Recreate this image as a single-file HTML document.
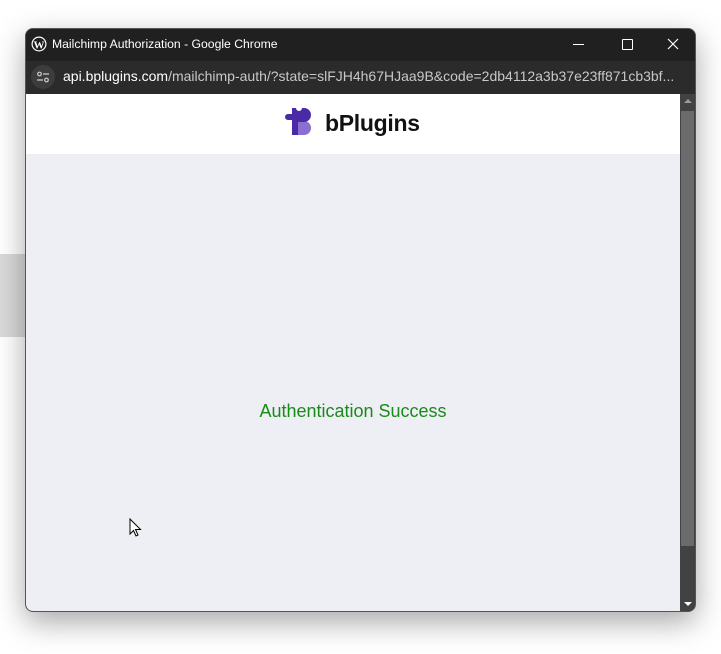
<!DOCTYPE html>
<html><head><style>
body{margin:0;width:721px;height:654px;background:#fff;position:relative;overflow:hidden;font-family:"Liberation Sans",sans-serif}
.side{position:absolute;left:0;top:254px;width:26px;height:83px;background:#dadada}
.win{position:absolute;left:25px;top:28px;width:671px;height:584px;border-radius:8px;overflow:hidden;background:#202020;box-shadow:0 10px 30px rgba(0,0,0,.35);border:1px solid #555;box-sizing:border-box}
.title{position:absolute;left:0;top:0;width:100%;height:32px;background:#202020;color:#fff;font-size:12.2px}
.addr{position:absolute;left:0;top:32px;width:100%;height:33px;background:#2b2b2b;color:#c8c8c8;font-size:14px}
.content{position:absolute;left:0;top:65px;width:654px;height:518px;background:#eeeff4}
.hdr{position:absolute;left:0;top:0;width:100%;height:60px;background:#fff}
.sb{position:absolute;left:654px;top:65px;width:16px;height:518px;background:#424242}
</style></head><body>
<div class="side"></div>
<div class="win">
 <div class="title">
  <svg style="position:absolute;left:5px;top:7px" width="16" height="16" viewBox="0 0 16 16"><circle cx="8" cy="8" r="7.5" fill="#fff"/><circle cx="8" cy="8" r="6.3" fill="#202020"/><text x="8" y="12.5" font-size="11" font-weight="bold" fill="#fff" text-anchor="middle" font-family="Liberation Serif">W</text></svg>
  <span style="position:absolute;left:26px;top:8px">Mailchimp Authorization - Google Chrome</span>
  <div style="position:absolute;left:547px;top:15px;width:11px;height:1px;background:#fff"></div>
  <div style="position:absolute;left:596px;top:10px;width:9px;height:9px;border:1px solid #fff;border-radius:1px"></div>
  <svg style="position:absolute;left:641px;top:9px" width="12" height="12"><path d="M1 1L11 11M11 1L1 11" stroke="#fff" stroke-width="1.2"/></svg>
 </div>
 <div class="addr">
  <div style="position:absolute;left:5px;top:4px;width:24px;height:24px;border-radius:12px;background:#3c3c3c"></div>
  <svg style="position:absolute;left:10px;top:9px" width="14" height="14"><circle cx="3.5" cy="4" r="1.8" fill="none" stroke="#ccc" stroke-width="1.2"/><path d="M7 4h6M1 10h6" stroke="#ccc" stroke-width="1.2"/><circle cx="10.5" cy="10" r="1.8" fill="none" stroke="#ccc" stroke-width="1.2"/></svg>
  <span style="position:absolute;left:37px;top:7px;white-space:nowrap"><span style="color:#fff">api.bplugins.com</span>/mailchimp-auth/?state=slFJH4h67HJaa9B&amp;code=2db4112a3b37e23ff871cb3bf...</span>
 </div>
 <div class="content">
  <div class="hdr">
   <svg style="position:absolute;left:258px;top:13px" width="30" height="28" viewBox="0 0 30 28">
    <path d="M14 14h6a7 7 0 0 1 0 14H14z" fill="#8a6fd0"/>
    <path d="M8 1h4a3 3 0 0 0 6 0h2a7 7 0 0 1 0 14H14v13H8V13H4a3 3 0 0 1 0-6h4z" fill="#4b2aa8"/>
   </svg>
   <span style="position:absolute;left:299px;top:16px;font-size:23px;font-weight:bold;color:#111;letter-spacing:-0.3px">bPlugins</span>
  </div>
  <div style="position:absolute;left:0;width:100%;top:307px;text-align:center;color:#1a8a1a;font-size:18px">Authentication Success</div>
 </div>
 <div class="sb">
  <div style="position:absolute;left:1px;top:17px;width:13px;height:435px;background:#6b6b6b"></div>
  <svg style="position:absolute;left:4px;top:4px" width="8" height="6"><path d="M0 5L4 1L8 5z" fill="#9a9a9a"/></svg>
  <svg style="position:absolute;left:4px;top:507px" width="8" height="6"><path d="M0 1L4 5L8 1z" fill="#fff"/></svg>
 </div>
</div>
<svg style="position:absolute;left:129px;top:518px" width="14" height="20"><path d="M1 1L1 16L4.5 12.5L7 18L9 17L6.5 11.5L11.5 11.5z" fill="#fff" stroke="#000" stroke-width="1"/></svg>
</body></html>
